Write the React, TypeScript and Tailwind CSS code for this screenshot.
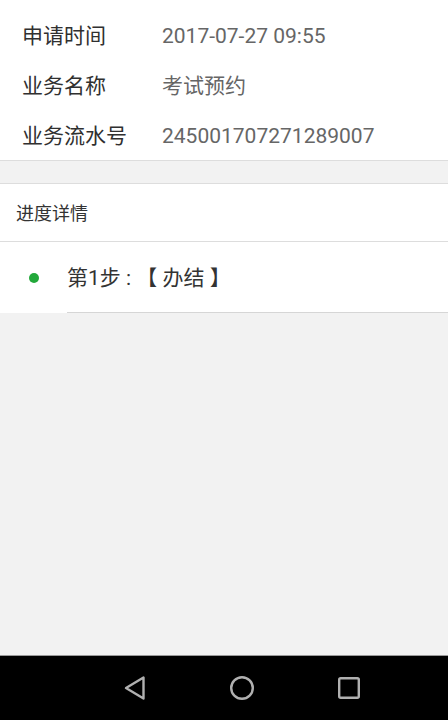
import React from "react";

const font = { fontFamily: "Roboto, 'Noto Sans CJK SC', sans-serif" };

function InfoRow({ label, value }: { label: string; value: string }) {
  return (
    <div className="flex h-[50px] items-center pt-[3px]">
      <div className="w-[162px] shrink-0 pl-[22px] text-[21px] text-[#303030]">{label}</div>
      <div className="text-[21px] text-[#666666]">{value}</div>
    </div>
  );
}

export default function App() {
  return (
    <div
      className="flex h-[720px] w-[448px] flex-col overflow-hidden bg-[#f2f2f2] [text-spacing-trim:space-all]"
      style={font}
    >
      <div className="flex-1">
        <div className="border-b border-[#dddddd] bg-white pt-[10px]">
          <InfoRow label="申请时间" value="2017-07-27 09:55" />
          <InfoRow label="业务名称" value="考试预约" />
          <InfoRow label="业务流水号" value="245001707271289007" />
        </div>

        <div className="mt-[22px] border-t border-[#dddddd] bg-white">
          <div className="flex h-[58px] items-center border-b border-[#dddddd] pl-[16px] pt-[2px] text-[18px] text-[#333333]">
            进度详情
          </div>
          <div className="flex h-[71px]">
            <div className="flex w-[67px] shrink-0 items-center justify-center">
              <div className="h-[10px] w-[10px] rounded-full bg-[#22a83a]" />
            </div>
            <div className="flex flex-1 items-center whitespace-pre border-b border-[#d6d6d6] pt-[4px] text-[21px] text-[#333333]">
              {"第1步 : 【 办结 】"}
            </div>
          </div>
        </div>
      </div>

      <div className="flex h-[65px] shrink-0 items-center gap-[82px] border-t-[1.5px] border-[#9a9a9a] bg-black pl-[123px]">
        <svg width="24" height="26" viewBox="0 0 24 26" fill="none">
          <path
            d="M20.5 2.5 L20.5 23.5 L3 13 Z"
            stroke="#b0b0b0"
            strokeWidth="2.4"
            strokeLinejoin="round"
          />
        </svg>
        <svg width="26" height="26" viewBox="0 0 26 26" fill="none">
          <circle cx="13" cy="13" r="10.8" stroke="#b0b0b0" strokeWidth="2.4" />
        </svg>
        <svg width="24" height="24" viewBox="0 0 24 24" fill="none">
          <rect x="2.2" y="2.2" width="19.6" height="19.6" rx="1.5" stroke="#b0b0b0" strokeWidth="2.4" />
        </svg>
      </div>
    </div>
  );
}
